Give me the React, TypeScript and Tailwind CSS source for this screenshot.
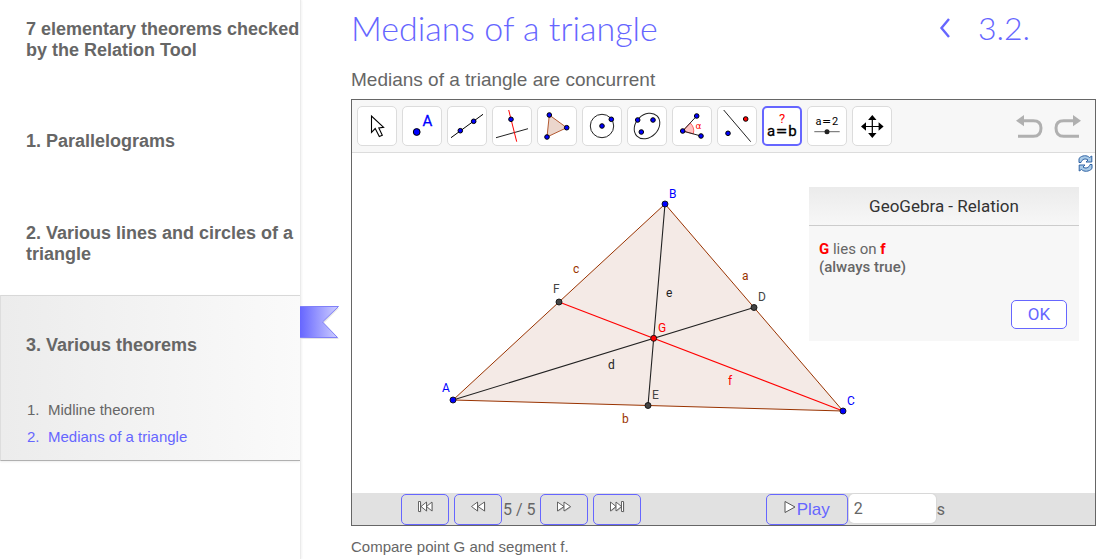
import React from 'react';

type P = { x: number; y: number; r?: number; fill?: string };

const Dot = ({ x, y, r = 2.3, fill = '#0000ff' }: P) => (
  <circle cx={x} cy={y} r={r} fill={fill} stroke="#000" strokeWidth="1" />
);

const tools: { name: string; icon: React.ReactNode; active?: boolean }[] = [
  {
    name: 'Move',
    icon: <path d="M13.5 9V25.3L17.2 21.5L21.3 29.5L24.3 28.3L20.8 21L25.6 20.3Z" fill="#fff" stroke="#000" strokeWidth="1.1" />,
  },
  {
    name: 'Point',
    icon: (
      <>
        <Dot x={13.7} y={25} r={3.4} />
        <text x="19.6" y="18.5" fontSize="15" fill="#0000ff" stroke="#0000ff" strokeWidth="0.3">A</text>
      </>
    ),
  },
  {
    name: 'Line',
    icon: (
      <>
        <path d="M3 30.7L35 7.3" stroke="#000" />
        <Dot x={12.3} y={23.7} />
        <Dot x={25.7} y={14.3} />
      </>
    ),
  },
  {
    name: 'Perpendicular Line',
    icon: (
      <>
        <path d="M3 30.7L35 21.7" stroke="#222" />
        <path d="M15.7 3L23.7 34.7" stroke="#ff0000" />
        <Dot x={18} y={12.3} />
      </>
    ),
  },
  {
    name: 'Polygon',
    icon: (
      <>
        <path d="M11.3 8L28.7 20.7L9 30Z" fill="#ebd6cc" stroke="#b35a33" />
        <Dot x={11.3} y={8} />
        <Dot x={28.7} y={20.7} />
        <Dot x={9} y={30} />
      </>
    ),
  },
  {
    name: 'Circle with Center through Point',
    icon: (
      <>
        <circle cx="19" cy="19" r="11.7" fill="none" stroke="#222" />
        <Dot x={19} y={19} />
        <Dot x={28.3} y={12.3} />
      </>
    ),
  },
  {
    name: 'Ellipse',
    icon: (
      <>
        <ellipse cx="19" cy="19" rx="14.2" ry="11.2" transform="rotate(-45 19 19)" fill="none" stroke="#222" />
        <Dot x={9.7} y={13} />
        <Dot x={25} y={13} />
        <Dot x={13.3} y={25} />
      </>
    ),
  },
  {
    name: 'Angle',
    icon: (
      <>
        <path d="M9.7 24L17.2 16A11 11 0 0 1 20.3 26.9Z" fill="#ffc4c4" stroke="#ff4040" strokeWidth="0.8" />
        <path d="M23.7 9L9.7 24L28 29" fill="none" stroke="#222" />
        <Dot x={9.7} y={24} />
        <Dot x={23.7} y={9} />
        <Dot x={28} y={29} />
        <text x="22.6" y="22.3" fontSize="9" fontFamily="DejaVu Sans" fill="#ff0000">α</text>
      </>
    ),
  },
  {
    name: 'Reflect about Line',
    icon: (
      <>
        <path d="M5.7 3L32.7 34.7" stroke="#222" />
        <Dot x={27.7} y={12} fill="#ff0000" />
        <Dot x={10} y={26.3} />
      </>
    ),
  },
  {
    name: 'Relation',
    active: true,
    icon: (
      <>
        <text x="19" y="16" fontSize="13" textAnchor="middle" fill="#ff0000">?</text>
        <text y="29.3" fontSize="15" textAnchor="middle" fill="#000" stroke="#000" strokeWidth="0.3">
          <tspan x="8">a</tspan>
          <tspan x="18.5" fontFamily="DejaVu Sans" fontSize="14">=</tspan>
          <tspan x="29.5">b</tspan>
        </text>
      </>
    ),
  },
  {
    name: 'Slider',
    icon: (
      <>
        <text y="17.7" fontSize="11" textAnchor="middle" fill="#000">
          <tspan x="10.5">a</tspan>
          <tspan x="18.5" fontFamily="DejaVu Sans">=</tspan>
          <tspan x="27">2</tspan>
        </text>
        <path d="M6.3 24.7H31.7" stroke="#666" />
        <circle cx="19" cy="24.7" r="2.5" fill="#222" />
      </>
    ),
  },
  {
    name: 'Move Graphics View',
    icon: (
      <>
        <path d="M19.3 11V28M11 19.5H28" stroke="#000" strokeWidth="1.2" />
        <path d="M19.3 8L23.5 13H15.1ZM19.3 31L23.5 26H15.1ZM8 19.5L13 15.3V23.7ZM30.6 19.5L25.6 15.3V23.7Z" fill="#000" />
      </>
    ),
  },
];

const Tool = ({ name, icon, active }: { name: string; icon: React.ReactNode; active?: boolean }) => (
  <button
    type="button"
    aria-label={name}
    aria-pressed={!!active}
    className={
      active
        ? 'flex size-10 items-center justify-center rounded-[5px] border-2 border-[#6666ff] bg-white'
        : 'flex size-10 items-center justify-center rounded-[5px] border border-[#dcdcdc] bg-white'
    }
  >
    <svg viewBox="0 0 38 38" className="size-[38px] shrink-0">{icon}</svg>
  </button>
);

const labels: [string, number, number, string][] = [
  ['A', 442, 392, '#0000ff'],
  ['B', 669, 198, '#0000ff'],
  ['C', 847, 405, '#0000ff'],
  ['D', 758, 301, '#444444'],
  ['E', 652, 399, '#444444'],
  ['F', 553, 293, '#444444'],
  ['G', 658, 332, '#ff0000'],
  ['a', 742, 280, '#993300'],
  ['b', 622, 423, '#993300'],
  ['c', 573, 273, '#993300'],
  ['d', 608, 369, '#222222'],
  ['e', 666, 297, '#222222'],
  ['f', 728, 385, '#ff0000'],
];

const points: [number, number, string][] = [
  [453, 400, '#0000ff'],
  [665, 204, '#0000ff'],
  [843, 411, '#0000ff'],
  [754, 307.5, '#444444'],
  [648, 405.5, '#444444'],
  [559, 302, '#444444'],
  [653.7, 338.3, '#ff0000'],
];

const Construction = () => (
  <svg
    viewBox="352 153 743 340"
    preserveAspectRatio="xMinYMin meet"
    role="img"
    aria-label="Triangle ABC and its medians"
    className="block h-[340px] w-full"
  >
    <path d="M453 400L665 204L843 411Z" fill="#f4eae6" stroke="#993300" />
    <path d="M453 400L754 307.5M665 204L648 405.5" stroke="#222" strokeWidth="1.1" />
    <path d="M559 302L843 411" stroke="#ff0000" strokeWidth="1.1" />
    {points.map(([x, y, fill]) => (
      <circle key={x} cx={x} cy={y} r="3" fill={fill} stroke="#111" strokeWidth="0.9" />
    ))}
    <g fontSize="12">
      {labels.map(([t, x, y, fill]) => (
        <text key={t} x={x} y={y} fill={fill}>{t}</text>
      ))}
    </g>
  </svg>
);

const navPaths = {
  first: 'M1.5 1.5H3.5V11.5H1.5ZM9.5 2V11L4 6.5ZM15 2V11L9.5 6.5Z',
  back: 'M7.5 2V11L1.5 6.5ZM14.5 2V11L8 6.5Z',
  next: 'M1.5 2V11L8 6.5ZM8 2V11L14.5 6.5Z',
  last: 'M1.5 2V11L7 6.5ZM7 2V11L12.5 6.5ZM12.5 1.5H14.5V11.5H12.5Z',
};

const NavButton = ({ label, d }: { label: string; d: string }) => (
  <button
    type="button"
    aria-label={label}
    className="flex h-[31px] w-12 justify-center rounded-[5px] border border-[#6666ff] pt-[5px]"
  >
    <svg viewBox="0 0 16 14" className="h-3.5 w-4">
      <path d={d} fill="#b5b5b5" transform="translate(0.8 0.8)" />
      <path d={d} fill="#fff" stroke="#555" strokeWidth="0.9" />
    </svg>
  </button>
);

const sectionTitle = 'text-[18px] leading-[21px] font-bold';

export default function App() {
  return (
    <div className="flex min-h-screen items-stretch overflow-x-hidden bg-white font-['Liberation_Sans',Arial,sans-serif] text-[#666666]">
      <nav className="w-[301px] shrink-0 border-r border-[#ebebeb] shadow-[1px_0_2px_#f3f3f3]">
        <h2 className={`${sectionTitle} pt-[19px] pl-[26px]`}>
          <a href="#top">7 elementary theorems checked by the Relation Tool</a>
        </h2>
        <div className="mt-[35px] py-[35px] pl-[26px]">
          <h3 className={sectionTitle}><a href="#1">1. Parallelograms</a></h3>
        </div>
        <div className="pt-9 pb-[30px] pl-[26px]">
          <h3 className={sectionTitle}><a href="#2">2. Various lines and circles of a triangle</a></h3>
        </div>
        <div className="relative border-y border-l border-t-[#d8d8d8] border-b-[#b0b0b0] border-l-[#dddddd] bg-linear-to-r from-[#ececec] to-[#fafafa] pt-[39px] pb-2.5 pl-[25px] shadow-[0_1px_2px_#eeeeee]">
          <h3 className={sectionTitle}><a href="#3">3. Various theorems</a></h3>
          <ol className="mt-10 text-[15px] leading-[27px]">
            <li className="flex"><span className="w-[22px] pl-px">1.</span><a href="#3.1">Midline theorem</a></li>
            <li className="flex text-[#6666ff]"><span className="w-[22px] pl-px">2.</span><a href="#3.2" aria-current="page">Medians of a triangle</a></li>
          </ol>
          <svg viewBox="0 0 42 36" aria-hidden="true" className="absolute top-[9px] left-full h-9 w-[42px]">
            <defs>
              <linearGradient id="ribbon">
                <stop offset="0" stopColor="#6666ff" />
                <stop offset="1" stopColor="#d0d0ff" />
              </linearGradient>
            </defs>
            <path d="M0 3H39L24 18L39 34H0Z" fill="#e4e4e4" />
            <path d="M0 1.5H38.5L22.5 17L37.5 32.5H0" fill="url(#ribbon)" stroke="#8080f8" />
          </svg>
        </div>
      </nav>

      <main className="min-w-0 flex-1 pr-5 pl-[50px]">
        <header className="flex h-14 items-center justify-between pr-[66px] font-['Century_Gothic','URW_Gothic',Lato,sans-serif] leading-10 font-light text-[#6666ff]">
          <h1 className="text-[34px]">Medians of a triangle</h1>
          <div className="flex items-center gap-[27px] text-[32px]">
            <a href="#3.1" aria-label="Previous">
              <svg viewBox="0 0 12 20" className="h-5 w-3">
                <path d="M10 1L2.5 10L10 19" fill="none" stroke="#6666ff" strokeWidth="2.4" />
              </svg>
            </a>
            <span>3.2.</span>
          </div>
        </header>
        <p className="h-[43px] pt-3 text-[19px] leading-6">Medians of a triangle are concurrent</p>

        <section className="border border-[#666666] font-[Roboto,sans-serif]">
          <div className="flex h-[53px] items-center justify-between border-b border-[#dcdcdc] bg-[#f7f7f7] pr-[13px] pl-[5px]">
            <div className="flex gap-[5px]">
              {tools.map((t) => <Tool key={t.name} {...t} />)}
            </div>
            <div className="flex gap-[11px]">
              <button type="button" aria-label="Undo">
                <svg viewBox="105 48 84 75" className="h-[25px] w-7">
                  <path d="M130 68H160Q183 68 183 90Q183 115 160 115H114" fill="none" stroke="#b0b0b0" strokeWidth="9" />
                  <path d="M108 68L132 51V85Z" fill="#b0b0b0" />
                </svg>
              </button>
              <button type="button" aria-label="Redo">
                <svg viewBox="222 48 84 75" className="h-[25px] w-7">
                  <path d="M281 68H251Q228 68 228 90Q228 115 251 115H297" fill="none" stroke="#b0b0b0" strokeWidth="9" />
                  <path d="M303 68L279 51V85Z" fill="#b0b0b0" />
                </svg>
              </button>
            </div>
          </div>

          <div className="relative bg-white">
            <Construction />
            <button type="button" aria-label="Reset" className="absolute top-0.5 right-0.5">
              <svg viewBox="0 0 15 17" className="h-[17px] w-[15px]">
                <path d="M1 7.5V3.5C4 0 9 0 11.5 2.5L13.8 1V7H8L10 5C7.5 3 4 4 3 7.5Z" fill="#a9cbe8" stroke="#2f62a3" />
                <path d="M14 9.5V13.5C11 17 6 17 3.5 14.5L1.2 16V10H7L5 12C7.5 14 11 13 12 9.5Z" fill="#a9cbe8" stroke="#2f62a3" />
              </svg>
            </button>
            <div role="dialog" aria-labelledby="relation-title" className="absolute top-[34px] right-4 w-[270px] bg-[#f7f7f7]">
              <h2 id="relation-title" className="h-[39px] border-b border-[#cccccc] bg-linear-to-b from-[#ebebeb] to-[#f7f7f7] text-center text-[17px] leading-[38px] text-[#333333]">
                GeoGebra - Relation
              </h2>
              <div className="px-2.5 pt-3.5 text-[15px] leading-[18px]">
                <p><b className="text-[#ff0000]">G</b> lies on <b className="text-[#ff0000]">f</b></p>
                <p className="font-medium">(always true)</p>
              </div>
              <div className="flex justify-end pt-6 pr-3 pb-3">
                <button type="button" className="h-[29px] w-14 rounded-[5px] border border-[#6666ff] bg-white text-[17px] leading-[27px] text-[#6666ff]">OK</button>
              </div>
            </div>
          </div>

          <div className="flex h-8 items-start justify-between bg-[#e1e1e1] pt-px pr-[150px] pl-[49px] text-[16px]">
            <div className="flex gap-[5px]">
              <NavButton label="First step" d={navPaths.first} />
              <div className="flex items-center gap-px">
                <NavButton label="Previous step" d={navPaths.back} />
                <span className="w-8 whitespace-nowrap">5 / 5</span>
              </div>
              <NavButton label="Next step" d={navPaths.next} />
              <NavButton label="Last step" d={navPaths.last} />
            </div>
            <div className="flex">
              <button type="button" className="flex h-[31px] w-[82px] items-center justify-center rounded-[5px] border border-[#6666ff] font-['Liberation_Sans',Arial,sans-serif] text-[17px] text-[#6666ff]">
                <svg viewBox="0 0 13 15" className="mb-1 h-[15px] w-[13px]">
                  <path d="M1 1.5V12.5L11 7Z" fill="#fff" stroke="#555" />
                </svg>
                Play
              </button>
              <label className="flex items-start">
                <input aria-label="Seconds per step" defaultValue="2" className="mr-px ml-px h-[29px] w-[87px] rounded-[5px] bg-white px-[5px] text-[16px] shadow-[0_0_1px_1px_#d8d8d8] outline-none" />
                <span className="leading-[31px]">s</span>
              </label>
            </div>
          </div>
        </section>

        <p className="pt-3 text-[15px] leading-[18px]">Compare point G and segment f.</p>
      </main>
    </div>
  );
}
